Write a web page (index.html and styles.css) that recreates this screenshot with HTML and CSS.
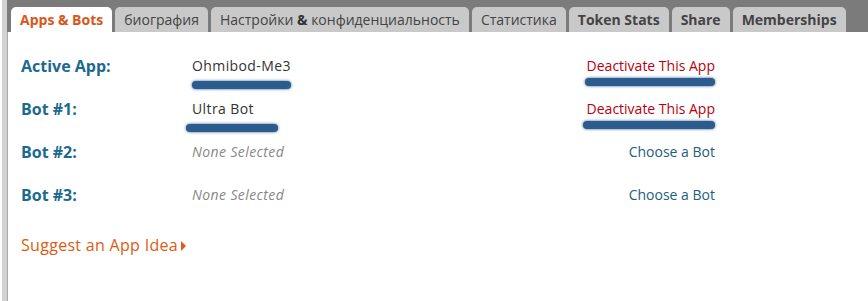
FILE: index.html
```html
<html>
  <head>
    <title>Apps &amp; Bots</title>
    <link rel="stylesheet" href="styles.css">
  </head>
  <body>
    <div class="panel">
      <ul class="tabs">
        <li class="tab active">Apps &amp; Bots</li>
        <li class="tab">биография</li>
        <li class="tab">Настройки <b>&amp;</b> конфиденциальность</li>
        <li class="tab">Статистика</li>
        <li class="tab strong">Token Stats</li>
        <li class="tab strong">Share</li>
        <li class="tab strong">Memberships</li>
      </ul>

      <div class="slots">
        <div class="row">
          <div class="label">Active App:</div>
          <div class="value">Ohmibod-Me3<span class="redact" style="width:99px"></span></div>
          <div class="action"><a class="deactivate">Deactivate This App</a><span class="redact up" style="width:130px"></span></div>
        </div>
        <div class="row">
          <div class="label">Bot #1:</div>
          <div class="value">Ultra Bot<span class="redact shift" style="width:92px"></span></div>
          <div class="action"><a class="deactivate">Deactivate This App</a><span class="redact up" style="width:132px"></span></div>
        </div>
        <div class="row">
          <div class="label">Bot #2:</div>
          <div class="value empty">None Selected</div>
          <div class="action"><a class="choose">Choose a Bot</a></div>
        </div>
        <div class="row">
          <div class="label">Bot #3:</div>
          <div class="value empty">None Selected</div>
          <div class="action"><a class="choose">Choose a Bot</a></div>
        </div>
      </div>

      <a class="suggest">Suggest an App Idea<span class="arrow"></span></a>
    </div>
  </body>
</html>
```

FILE: styles.css
```css
body {
  margin: 0;
  padding-left: 2px;
  font-family: "Open Sans", "DejaVu Sans", sans-serif;
  background: white;
}
.panel {
  border-left: 5px solid #d2d2d2;
  box-shadow: inset 1px 0 0 #a8a8a8;
  height: 301px;
}

.tabs {
  margin: 0;
  padding: 7px 0 0 4px;
  list-style: none;
  display: flex;
  gap: 3px;
  background: #7b7b7b;
  height: 25px;
}
.tab {
  height: 25px;
  line-height: 25px;
  padding: 0 9px;
  background: #c9c9c9;
  border-radius: 5px 5px 0 0;
  color: #444;
  font-size: 14px;
  white-space: nowrap;
}
.tab b { color: #333; }
.tab.strong { font-weight: bold; }
.tab.active {
  background: white;
  color: #d9561a;
  font-weight: bold;
}

.slots {
  padding: 24px 0 0 14px;
  width: 694px;
}
.row {
  display: grid;
  grid-template-columns: 171px 1fr auto;
  height: 43px;
}
.label {
  color: #1b6a8e;
  font-weight: bold;
  font-size: 16px;
  line-height: 20px;
}
.value {
  color: #333;
  font-size: 14px;
  letter-spacing: 0.4px;
  line-height: 20px;
}
.value.empty {
  color: #888;
  font-style: italic;
}
.action {
  font-size: 14px;
  line-height: 20px;
  text-align: right;
}
.deactivate { color: #b8000c; }
.choose { color: #1b5e7e; }

.redact {
  display: block;
  height: 8px;
  margin-top: 5px;
  border-radius: 4px;
  background: #2c5b8d;
  box-shadow: 0 0 3px #2c5b8d;
}
.redact.up { margin-top: 2px; }
.value .redact.shift { margin-left: -6px; }
.action .redact { margin-left: auto; }

.suggest {
  display: block;
  margin: 6px 0 0 14px;
  color: #dd5b12;
  font-size: 16px;
  letter-spacing: 0.3px;
}
.arrow {
  display: inline-block;
  margin-left: 3px;
  border-left: 5px solid #dd5b12;
  border-top: 5px solid transparent;
  border-bottom: 5px solid transparent;
}
```
